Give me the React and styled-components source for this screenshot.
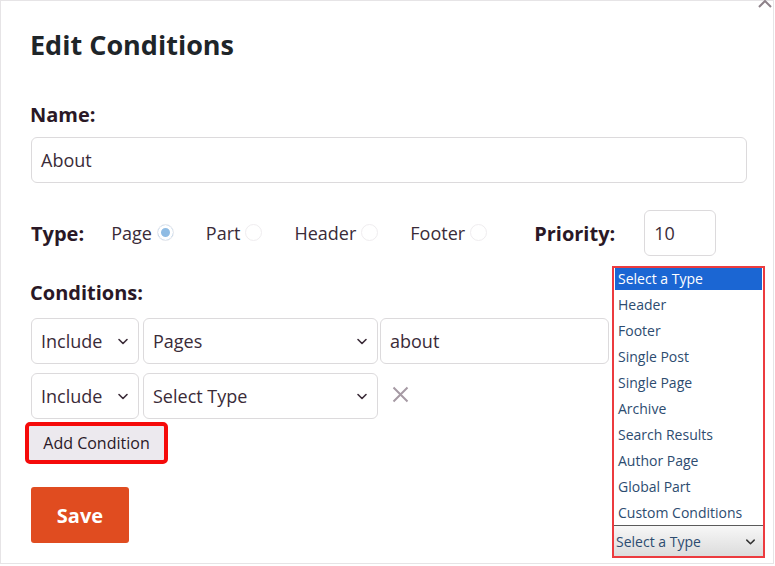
import React from 'react';
import styled, { createGlobalStyle } from 'styled-components';

const Global = createGlobalStyle`
  body {
    margin: 0;
    background: #fff;
    font-family: "Open Sans", "Noto Sans", sans-serif;
  }
`

const Modal = styled.div`
  position: relative;
  box-sizing: border-box;
  width: 774px;
  height: 564px;
  border: 1px solid #e6e4e6;
  padding: 26px 30px 0 30px;
  background: #fff;
`

const Collapse = styled.svg`
  position: absolute;
  top: -4px;
  right: -1px;
`

const Title = styled.h2`
  margin: 0 0 0 -1px;
  font-size: 27px;
  line-height: 36px;
  font-weight: 700;
  color: #1e2529;
`

const Label = styled.div`
  margin-top: ${(p) => p.$top || 0}px;
  margin-left: -1px;
  font-size: 20px;
  line-height: 24px;
  font-weight: 700;
  color: #2a1826;
`

const TextField = styled.div`
  box-sizing: border-box;
  width: ${(p) => p.$width}px;
  height: 46px;
  margin-top: ${(p) => p.$top || 0}px;
  margin-left: ${(p) => p.$left || 0}px;
  border: 1px solid #dcdadc;
  border-radius: 6px;
  padding: 0 9px;
  display: flex;
  align-items: center;
  font-size: 18px;
  color: #3a2b38;
  background: #fff;
  flex-shrink: 0;
`

const TypeRow = styled.div`
  margin-top: 27px;
  height: 46px;
  display: flex;
  align-items: center;
`

const TypeLabel = styled.span`
  font-size: 20px;
  font-weight: 700;
  color: #2a1826;
  margin-right: ${(p) => p.$gap}px;
  margin-left: ${(p) => p.$left || 0}px;
`

const Option = styled.label`
  display: flex;
  align-items: center;
  gap: 5px;
  margin-right: 32px;
  font-size: 18px;
  color: #3a2b38;
`

const Radio = styled.span`
  box-sizing: border-box;
  width: 17px;
  height: 17px;
  margin-top: -2px;
  border-radius: 50%;
  border: 1px solid #efedef;
  background: ${(p) => (p.$on ? '#8fbce4' : '#fff')};
  box-shadow: ${(p) => (p.$on ? 'inset 0 0 0 3px #fff' : 'none')};
`

const CondRow = styled.div`
  display: flex;
  align-items: center;
  gap: 4px;
  margin-top: ${(p) => p.$top}px;
`

const SelectBox = styled.div`
  box-sizing: border-box;
  width: ${(p) => p.$width}px;
  height: 46px;
  border: 1px solid #dcdadc;
  border-radius: 6px;
  padding: 0 8px 0 9px;
  display: flex;
  align-items: center;
  justify-content: space-between;
  font-size: 18px;
  color: #3a2b38;
  background: #fff;
  flex-shrink: 0;
`

const Remove = styled.svg`
  margin-left: 10px;
  margin-top: -4px;
`

const AddButton = styled.button`
  margin: 7px 0 0 -2px;
  width: 135px;
  height: 34px;
  border: none;
  outline: 4px solid #f50a0a;
  border-radius: 1px;
  background: #ece9ee;
  font-family: inherit;
  font-size: 16px;
  color: #2a1826;
  padding: 0;
`

const SaveButton = styled.button`
  display: block;
  margin-top: 27px;
  width: 98px;
  height: 56px;
  border: none;
  border-radius: 3px;
  background: #e04c20;
  color: #fff;
  font-family: inherit;
  font-size: 20px;
  font-weight: 700;
`

const Dropdown = styled.div`
  position: absolute;
  left: 611px;
  top: 265px;
  box-sizing: border-box;
  width: 153px;
  height: 292px;
  border: 2px solid #ec3b3f;
  background: #fff;
  display: flex;
  flex-direction: column;
`

const List = styled.div`
  display: flex;
  flex-direction: column;
  gap: 4px;
  padding: 0 1px;
  flex: 1;
`

const Item = styled.div`
  height: 22px;
  line-height: 21px;
  padding-left: 3px;
  font-size: 14px;
  color: ${(p) => (p.$active ? '#fff' : '#2d4c70')};
  background: ${(p) => (p.$active ? '#1b66d3' : 'transparent')};
`

const Closed = styled.div`
  height: 30px;
  border-top: 1px solid #5a5a5a;
  background: linear-gradient(#f7f7f7, #dcdcdc);
  display: flex;
  align-items: center;
  justify-content: space-between;
  padding: 0 6px 0 2px;
  font-size: 14px;
  color: #2d4c70;
`

const Chevron = ({ size = 14, color = '#3a2b38' }) => (
  <svg width={size} height={size} viewBox="0 0 14 14">
    <path d="M3 5.5 L7 9.5 L11 5.5" fill="none" stroke={color} strokeWidth="1.6" strokeLinecap="round" strokeLinejoin="round" />
  </svg>
);

const types = ['Header', 'Footer', 'Single Post', 'Single Page', 'Archive', 'Search Results', 'Author Page', 'Global Part', 'Custom Conditions'];

export default function App() {
  return (
    <>
      <Global />
      <Modal>
        <Collapse width="18" height="14" viewBox="0 0 18 14">
          <path d="M3 10 L9 4 L15 10" fill="none" stroke="#8d8189" strokeWidth="2" />
        </Collapse>
        <Title>Edit Conditions</Title>
        <Label $top={40}>Name:</Label>
        <TextField $width={716} $top={10}>About</TextField>

        <TypeRow>
          <TypeLabel $gap={27}>Type:</TypeLabel>
          <Option>Page<Radio $on /></Option>
          <Option>Part<Radio /></Option>
          <Option>Header<Radio /></Option>
          <Option>Footer<Radio /></Option>
          <TypeLabel $gap={29} $left={15}>Priority:</TypeLabel>
          <TextField $width={72}>10</TextField>
        </TypeRow>

        <Label $top={25}>Conditions:</Label>
        <CondRow $top={13}>
          <SelectBox $width={108}>Include<Chevron /></SelectBox>
          <SelectBox $width={235}>Pages<Chevron /></SelectBox>
          <TextField $width={229} $left={-2}>about</TextField>
        </CondRow>
        <CondRow $top={9}>
          <SelectBox $width={108}>Include<Chevron /></SelectBox>
          <SelectBox $width={235}>Select Type<Chevron /></SelectBox>
          <Remove width="17" height="17" viewBox="0 0 17 17">
            <path d="M1.5 1.5 L15.5 15.5 M15.5 1.5 L1.5 15.5" stroke="#a69aa4" strokeWidth="2" />
          </Remove>
        </CondRow>
        <AddButton>Add Condition</AddButton>
        <SaveButton>Save</SaveButton>

        <Dropdown>
          <List>
            <Item $active>Select a Type</Item>
            {types.map((t) => (
              <Item key={t}>{t}</Item>
            ))}
          </List>
          <Closed>
            Select a Type
            <Chevron size={13} color="#333" />
          </Closed>
        </Dropdown>
      </Modal>
    </>
  );
}
